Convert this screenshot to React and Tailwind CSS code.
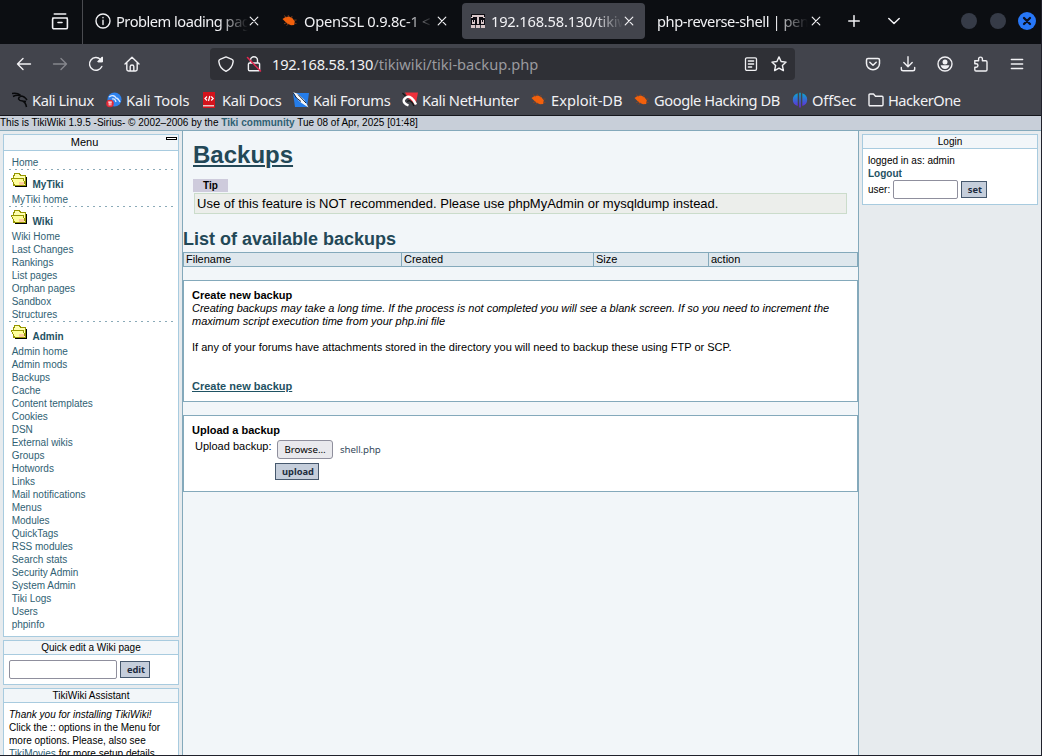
import React from "react";

const line = { fill: "none", stroke: "#f1f1f4", strokeWidth: 1.4, strokeLinecap: "round", strokeLinejoin: "round" };

function Icon({ children, className = "", size = 16, ...rest }) {
  return (
    <svg width={size} height={size} viewBox={`0 0 ${size} ${size}`} className={`block shrink-0 ${className}`} {...line} {...rest}>
      {children}
    </svg>
  );
}

function Bug({ className = "" }) {
  return (
    <svg width="15" height="14" viewBox="0 0 15 14" className={`block shrink-0 ${className}`}>
      <path d="M.5 5 L3.5 3 L7 2.6 L10.5 4.2 L12.8 7.5 L12.2 11 L9 11.2 L5 9.5 L2.5 7 Z" fill="#f2600c" />
      <path d="M2 1.5 L4.5 3.6 M6 1 L7 3 M10 2 L9.5 4.2 M12 6.2 L14.5 6 M12 9 L14.5 9.6 M4.5 8.7 L2 9.8 M6.5 10 L4.5 11.5" stroke="#8f4520" strokeWidth="0.8" fill="none" />
    </svg>
  );
}

function Close({ className = "" }) {
  return (
    <Icon size={10} className={className} strokeWidth="1.2">
      <path d="M1.2 1.2 L8.8 8.8 M8.8 1.2 L1.2 8.8" />
    </Icon>
  );
}

function TabBar() {
  const label = "overflow-hidden whitespace-nowrap text-[14.67px] leading-[20px] [mask-image:linear-gradient(to_right,black_78%,transparent)]";
  return (
    <div className="flex h-[44px] items-center bg-[#0c0e12] text-[#f1f1f4]">
      <div className="flex h-[44px] w-[83px] items-start border-r border-[#4a4b50] pl-[51px] pt-[13px]">
        <Icon size={18} strokeWidth="1.6">
          <path d="M3.3 1 H14.7 M1.8 5 H16.2 M3 5 h12 a1.4 1.4 0 0 1 1.4 1.4 v8 a1.4 1.4 0 0 1 -1.4 1.4 h-12 a1.4 1.4 0 0 1 -1.4 -1.4 v-8 a1.4 1.4 0 0 1 1.4 -1.4 M7 9.5 h4" />
        </Icon>
      </div>
      <div className="flex w-[177px] items-center pb-[2px] pl-[12px]">
        <Icon size={16}>
          <circle cx="8" cy="8" r="7" />
          <path d="M8 7.3 V11.5 M8 4.5 V4.8" />
        </Icon>
        <div className={`ml-[5px] w-[132px] tracking-[-0.5px] ${label}`}>Problem loading page</div>
        <Close className="ml-[1px]" />
      </div>
      <div className="flex w-[202px] items-center pb-[2px] pl-[22px]">
        <Bug />
        <div className={`ml-[7px] w-[130px] tracking-[-0.25px] ${label}`}>OpenSSL 0.9.8c-1 &lt; 0.9</div>
        <Close className="ml-[3px]" />
      </div>
      <div className="mb-[2px] flex h-[36px] w-[183px] items-center rounded-[4px] bg-[#42444c] pl-[9px]">
        <svg width="14" height="14" viewBox="0 0 14 14" className="block shrink-0" shapeRendering="crispEdges">
          <path fill="#0d0c12" d="M0 0h14v11H0z" />
          <path fill="#d8c6c8" d="M1 1h12v2H1z M6 3h2v7H6z M1 6h3v4H1z M10 6h3v4h-3z" />
          <path fill="#0d0c12" d="M2 6h1v2H2z M11 6h1v2h-1z" />
          <path fill="#d8c6c8" d="M0 11h4v3H0z M5 11h4v3H5z M10 11h4v3h-4z M0 3h2v1H0z M12 3h2v1h-2z" />
        </svg>
        <div className={`ml-[6px] w-[132px] tracking-[-0.2px] ${label}`}>192.168.58.130/tikiwiki</div>
        <Close className="ml-px" />
      </div>
      <div className="flex w-[190px] items-center pb-[2px] pl-[12px]">
        <div className={`w-[151px] tracking-[-0.42px] ${label}`}>php-reverse-shell | pente</div>
        <Close className="ml-[3px]" />
      </div>
      <div className="flex flex-1 items-center pb-[2px] pl-[13px]">
        <Icon size={12} strokeWidth="1.5"><path d="M6 .7 V11.3 M.7 6 H11.3" /></Icon>
        <Icon size={12} className="ml-[28px]" strokeWidth="1.5"><path d="M.8 3.5 L6 8.5 L11.2 3.5" /></Icon>
        <div className="ml-[61px] size-[16px] rounded-full bg-[#363b47]" />
        <div className="ml-[13px] size-[16px] rounded-full bg-[#363b47]" />
        <svg width="18" height="18" viewBox="0 0 18 18" className="ml-[12px] block">
          <circle cx="9" cy="9" r="9" fill="#2777f7" />
          <path d="M6 6 L12 12 M12 6 L6 12" stroke="#0b1020" strokeWidth="2.3" strokeLinecap="round" />
        </svg>
      </div>
    </div>
  );
}

function NavBar() {
  return (
    <div className="flex h-[40px] items-center pl-[16px] text-[14.67px] text-[#f1f1f4]">
      <Icon><path d="M14.5 8 H1.5 M7 2.5 L1.5 8 L7 13.5" /></Icon>
      <Icon className="ml-[20px]" stroke="#85868c"><path d="M1.5 8 H14.5 M9 2.5 L14.5 8 L9 13.5" /></Icon>
      <Icon className="ml-[20px]">
        <path d="M13.8 10.5 A6.4 6.4 0 1 1 12.5 3.4 L14 5 M14.2 1.5 V5.5 H10.2" />
        <path d="M14.2 1.5 V5.5 H10.2 Z" fill="#f1f1f4" />
      </Icon>
      <Icon className="ml-[20px]">
        <path d="M1 8 L8 1.2 L15 8 M2.8 6.5 V13.3 Q2.8 15 4.5 15 H11.5 Q13.2 15 13.2 13.3 V6.5 M6.2 15 V10.5 Q6.2 9 8 9 Q9.8 9 9.8 10.5 V15" />
      </Icon>
      <div className="ml-[70px] flex h-[32px] w-[585px] items-center rounded-[4px] bg-[#2f3036] pl-[8px]">
        <Icon>
          <path d="M8 .9 L14 3.3 Q15.4 3.8 15.1 5.8 Q14.3 12.3 8 15.3 Q1.7 12.3 .9 5.8 Q.6 3.8 2 3.3 Z" />
        </Icon>
        <Icon className="ml-[12px]">
          <path d="M4.5 7 V4.3 A3.5 3.5 0 0 1 11.5 4.3 V7 M3.6 7 h8.8 a1.2 1.2 0 0 1 1.2 1.2 v5.4 a1.2 1.2 0 0 1 -1.2 1.2 h-8.8 a1.2 1.2 0 0 1 -1.2 -1.2 v-5.4 a1.2 1.2 0 0 1 1.2 -1.2" />
          <path d="M1.5 1.5 L14.5 15" stroke="#e22850" strokeWidth="1.5" />
        </Icon>
        <div className="ml-[10px] w-[472px] whitespace-nowrap leading-[20px]">
          <span className="tracking-[-0.2px]">192.168.58.130</span><span className="text-[#9a9a9f]">/tikiwiki/tiki-backup.php</span>
        </div>
        <Icon size={14} strokeWidth="1.3">
          <rect x="1.5" y=".8" width="11" height="12.5" rx="1.3" />
          <path d="M4.3 4 H9.7 M4.3 7 H9.7 M4.3 10 H7.7" />
        </Icon>
        <Icon className="ml-[13px]">
          <path d="M8 .9 L10.1 5.5 L15.1 6.1 L11.4 9.5 L12.4 14.6 L8 12.1 L3.6 14.6 L4.6 9.5 L.9 6.1 L5.9 5.5 Z" />
        </Icon>
      </div>
      <Icon className="ml-[70px]" strokeWidth="1.5">
        <path d="M3 2.5 H13 Q14.5 2.5 14.5 4 V7.5 A6.5 6.2 0 0 1 1.5 7.5 V4 Q1.5 2.5 3 2.5 M4.8 6.3 L8 9.3 L11.2 6.3" />
      </Icon>
      <Icon className="ml-[19px]"><path d="M8 .8 V10.5 M3.8 6.5 L8 10.7 L12.2 6.5 M1.3 11.5 V13 Q1.3 14.8 3.1 14.8 H12.9 Q14.7 14.8 14.7 13 V11.5" /></Icon>
      <Icon className="ml-[21px]">
        <circle cx="8" cy="8" r="7" />
        <circle cx="8" cy="5.9" r="2.5" fill="#f1f1f4" stroke="none" />
        <path d="M3.6 9.2 H12.4 Q11.6 12.8 8 12.9 Q4.4 12.8 3.6 9.2 Z" fill="#f1f1f4" stroke="none" />
      </Icon>
      <Icon className="ml-[20px]">
        <path d="M2 4.8 H5.6 V3 A1.9 1.9 0 0 1 9.4 3 V4.8 H12.8 Q14 4.8 14 6 V13.8 Q14 15 12.8 15 H3 Q1.8 15 1.8 13.8 V11.3 H3.2 A1.7 1.7 0 0 0 3.2 7.8 H1.8 V4.8" />
      </Icon>
      <Icon className="ml-[20px]"><path d="M2.4 3.5 H13.6 M2.4 8 H13.6 M2.4 12.5 H13.6" strokeWidth="1.5" /></Icon>
    </div>
  );
}

const bookmarks = [
  { text: "Kali Linux", w: "w-[94px]", t: "tracking-[-0.42px]", icon: (
    <svg width="16" height="16" viewBox="0 0 16 16"><path d="M0 1.5 Q5 .5 8.5 3 M1 4.5 Q5 2.5 9 4 Q6.5 5 6.5 7 Q7.5 9 10.5 9 Q13.5 10 14.5 15 M8 4 Q12 3.5 15 8 M10 9 L14 9.5" fill="none" stroke="#08090b" strokeWidth="1.5" /></svg>) },
  { text: "Kali Tools", w: "w-[96px]", t: "tracking-[-0.1px]", icon: (
    <svg width="16" height="16" viewBox="0 0 16 16"><circle cx="8.5" cy="7.5" r="7" fill="#2f83ee" /><path d="M3 5 Q8 2 10 6 Q12 6 14 10 M6 7 Q9 6 10 10" fill="none" stroke="#dceaff" strokeWidth="1.3" /><circle cx="4" cy="11.5" r="3.8" fill="#e32937" /><path d="M2.2 10 H5.8 M3.2 10 V13.5 M4.9 10 V13.5" stroke="#fff" strokeWidth=".9" /></svg>) },
  { text: "Kali Docs", w: "w-[91px]", t: "tracking-[-0.33px]", icon: (
    <svg width="16" height="16" viewBox="0 0 16 16"><path d="M1 0 H13 V16 H1 Z" fill="#d4131c" /><path d="M1 13 H12 V14.5 H1 Z" fill="#e9c5c7" /><path d="M5 4.5 L3 6.5 L5 8.5 M9.2 4.5 L11.2 6.5 L9.2 8.5 M7.8 4 L6.5 9" fill="none" stroke="#fff" strokeWidth="1.2" /></svg>) },
  { text: "Kali Forums", w: "w-[109px]", t: "tracking-[-0.33px]", icon: (
    <svg width="16" height="16" viewBox="0 0 16 16"><path d="M0 1 H16 L14 15 H2 Z" fill="#257de9" /><path d="M0 0 L5 2 L11 7.5 L15.5 15.5 L8.5 11 L5 8 Z" fill="#f5f7fa" /><path d="M0 .5 L3.5 6 L8 9.5 M5 2.5 L13 11" fill="none" stroke="#17263c" strokeWidth="1" /></svg>) },
  { text: "Kali NetHunter", w: "w-[129px]", t: "tracking-[-0.36px]", icon: (
    <svg width="16" height="16" viewBox="0 0 16 16"><path d="M3 .5 H16 L13.5 13 L6 6 Z" fill="#ee303b" /><path d="M6.5 13.5 Q.5 11 2 7.5 Q5 3 9.5 6 Q12 8 14 12.5" fill="none" stroke="#fff" strokeWidth="2.4" /><path d="M5.5 10 Q6.5 7 10 10.5 L12 14 M.5 1 L3.5 4" fill="none" stroke="#171717" strokeWidth="1.3" /></svg>) },
  { text: "Exploit-DB", w: "w-[103px]", t: "", icon: <Bug /> },
  { text: "Google Hacking DB", w: "w-[158px]", t: "tracking-[-0.42px]", icon: <Bug /> },
  { text: "OffSec", w: "w-[76px]", t: "tracking-[-0.1px]", icon: (
    <svg width="16" height="16" viewBox="0 0 16 16"><defs><linearGradient id="os" x1="0" y1="0" x2="0" y2="1"><stop offset="0" stopColor="#08a9cf" /><stop offset="1" stopColor="#6a24d8" /></linearGradient></defs><path d="M5.7 1.2 V14 Q.8 12.5 .8 7.5 Q.8 3 5.7 1.2 M7.2 .8 H8.8 V15.5 H7.2 Z M10.3 1.2 V14 Q15.2 12.5 15.2 7.5 Q15.2 3 10.3 1.2" fill="url(#os)" /></svg>) },
  { text: "HackerOne", w: "w-[110px]", t: "tracking-[-0.5px]", icon: (
    <Icon><path d="M1 12.5 V3 Q1 2 2 2 H5.5 L7.5 4.2 H14 Q15 4.2 15 5.2 V12.7 Q15 13.8 14 13.8 H2 Q1 13.8 1 12.5 Z" /></Icon>) },
];

function Bookmarks() {
  return (
    <div className="flex h-[31px] items-center pl-[12px] text-[14.67px] text-[#f1f1f4]">
      {bookmarks.map((b) => (
        <div key={b.text} className={`flex shrink-0 items-center ${b.w}`}>
          <div className="flex w-[16px] shrink-0">{b.icon}</div>
          <span className={`ml-[4px] whitespace-nowrap leading-[20px] ${b.t}`}>{b.text}</span>
        </div>
      ))}
    </div>
  );
}

function Folder() {
  return (
    <svg width="17" height="14" viewBox="0 0 17 14" className="block shrink-0" shapeRendering="crispEdges">
      <path d="M4 13h12v1H4z M15 4h1v10h-1z" fill="#000" />
      <path d="M2.5 3.5 L4 .5 H8 L10 2.5 H14.5 V12.5 H3 Z" fill="#ffffb0" stroke="#969600" />
      <path d="M.5 5.5 H12 L14.5 12.5 H3.5 Z" fill="#ffff9c" stroke="#969600" />
      <path d="M8 9h5v3H8z" fill="#ffce9c" />
    </svg>
  );
}

function MenuSection({ title, items }) {
  return (
    <div className="pt-px">
      <div className="flex h-[23px] pl-[2px]">
        <div className="pt-[3px]"><Folder /></div>
        <span className="ml-[4.5px] pt-[8px] text-[10px] font-bold leading-[13px] text-[#1f5263]">{title}</span>
      </div>
      {items.map((i) => <div key={i} className="h-[13px] pl-[2.7px] leading-[13px]">{i}</div>)}
    </div>
  );
}

function Dashes() {
  return <div className="-mb-px h-px bg-[repeating-linear-gradient(to_right,#8aaab8_0_2px,transparent_2px_6px)]" />;
}

function Panel({ title, children, className = "", titleClass = "" }) {
  return (
    <div className={`border border-[#a8cbdf] bg-white ${className}`}>
      <div className={`border-b border-[#a8cbdf] bg-[#f2f6f9] text-center ${titleClass}`}>{title}</div>
      {children}
    </div>
  );
}

const button = "border border-[#46586d] bg-[#c5cedb] text-center font-['Noto_Sans',sans-serif] text-[9.3px] font-bold text-[#1e2c40]";
const field = "rounded-[2px] border border-[#8f8f9d] bg-white";
const admin = ["Admin home", "Admin mods", "Backups", "Cache", "Content templates", "Cookies", "DSN", "External wikis", "Groups", "Hotwords", "Links", "Mail notifications", "Menus", "Modules", "QuickTags", "RSS modules", "Search stats", "Security Admin", "System Admin", "Tiki Logs", "Users", "phpinfo"];

function LeftColumn() {
  return (
    <div className="flex w-[183px] shrink-0 flex-col gap-[3px] border-r border-[#84a9bb] bg-[#e7ebee] pl-[3px] pr-[3px] pt-[3px]">
      <Panel className="relative h-[503px] shrink-0" title="Menu" titleClass="h-[16px] pr-[13px] text-[11px] leading-[15px]">
        <div className="absolute right-[1px] top-[2px] h-[3px] w-[11px] border border-black bg-white" />
        <div className="px-[5px] pt-[5px] text-[#2f6173]">
          <div className="h-[13px] pl-[2.7px] leading-[13px]">Home</div>
          <Dashes />
          <MenuSection title="MyTiki" items={["MyTiki home"]} />
          <Dashes />
          <MenuSection title="Wiki" items={["Wiki Home", "Last Changes", "Rankings", "List pages", "Orphan pages", "Sandbox", "Structures"]} />
          <Dashes />
          <MenuSection title="Admin" items={admin} />
        </div>
      </Panel>
      <Panel className="h-[45px] shrink-0" title="Quick edit a Wiki page" titleClass="h-[14px] leading-[13px]">
        <div className="flex items-center pl-[5px] pt-[5px]">
          <div className={`h-[19px] w-[108px] ${field}`} />
          <div className={`ml-[3px] h-[17px] w-[30px] pl-[2px] leading-[15px] ${button}`}>edit</div>
        </div>
      </Panel>
      <Panel className="h-[90px] shrink-0" title="TikiWiki Assistant" titleClass="h-[14px] leading-[13px]">
        <div className="whitespace-nowrap pl-[5px] pt-[5px] leading-[13px]">
          <div className="italic">Thank you for installing TikiWiki!</div>
          <div>Click the :: options in the Menu for</div>
          <div>more options. Please, also see</div>
          <div><span className="text-[#2f6173]">TikiMovies</span> for more setup details.</div>
        </div>
      </Panel>
    </div>
  );
}

function Center() {
  return (
    <div className="flex w-[675px] shrink-0 flex-col text-[11px] leading-[13px]">
      <h1 className="ml-[10px] mt-[10px] h-[28px] text-[24px] font-bold leading-[28px] text-[#234857] underline decoration-2 underline-offset-2">Backups</h1>
      <div className="ml-[10px] mt-[10px] h-[13px] w-[35px] bg-[#cecbdc] text-center text-[10px] font-bold leading-[13px]">Tip</div>
      <div className="ml-[11px] mt-px h-[21px] w-[653px] border border-[#cbdccb] bg-[#eceeeb] pl-[2px] text-[13px] leading-[19px]">
        Use of this feature is NOT recommended. Please use phpMyAdmin or mysqldump instead.
      </div>
      <h2 className="mt-[15px] h-[23px] text-[18px] font-bold leading-[21px] text-[#234857]">List of available backups</h2>
      <div className="grid h-[15px] grid-cols-[218px_192px_115px_1fr] border border-[#84a9bb] bg-[#dee7ed]">
        <div className="border-r border-[#84a9bb] pl-[2px]">Filename</div>
        <div className="border-r border-[#84a9bb] pl-[2px]">Created</div>
        <div className="border-r border-[#84a9bb] pl-[2px]">Size</div>
        <div className="pl-[2px]">action</div>
      </div>
      <div className="mt-[13px] h-[122px] border border-[#84a9bb] bg-white pl-[8px] pt-[8px]">
        <div className="font-bold">Create new backup</div>
        <div className="whitespace-nowrap italic">Creating backups may take a long time. If the process is not completed you will see a blank screen. If so you need to increment the</div>
        <div className="italic">maximum script execution time from your php.ini file</div>
        <div className="mt-[13px]">If any of your forums have attachments stored in the directory you will need to backup these using FTP or SCP.</div>
        <div className="mt-[26px] font-bold text-[#1f5263] underline">Create new backup</div>
      </div>
      <div className="mt-[13px] h-[77px] border border-[#84a9bb] bg-white pl-[8px] pt-[8px]">
        <div className="font-bold">Upload a backup</div>
        <div className="flex pl-[3px]">
          <div className="w-[80px] pt-[3px]">Upload backup:</div>
          <div className="flex h-[26px] items-start pl-[2px] pt-[3px] font-['Noto_Sans',sans-serif] text-[9.7px] leading-[17px]">
            <div className="h-[19px] w-[56px] rounded-[3px] border border-[#8f8f9d] bg-[#e9e9ed] text-center">Browse…</div>
            <div className="ml-[7px] pt-px tracking-[-0.1px] text-[#35495c]">shell.php</div>
          </div>
        </div>
        <div className={`ml-[83px] h-[17px] w-[44px] pl-[2px] leading-[15px] ${button}`}>upload</div>
      </div>
    </div>
  );
}

function RightColumn() {
  return (
    <div className="flex-1 border-l border-[#84a9bb] bg-[#e7ebee] pl-[3px] pt-[3px]">
      <Panel className="h-[71px] w-[176px]" title="Login" titleClass="h-[14px] leading-[13px]">
        <div className="pl-[5px] pt-[5px] leading-[13px]">
          <div>logged in as: admin</div>
          <div className="font-bold text-[#1f5263]">Logout</div>
          <div className="flex h-[19px] items-center">
            <span className="w-[25px]">user:</span>
            <div className={`h-[19px] w-[65px] ${field}`} />
            <div className={`ml-[3px] h-[17px] w-[26px] pl-[2px] leading-[15px] ${button}`}>set</div>
          </div>
        </div>
      </Panel>
    </div>
  );
}

export default function App() {
  return (
    <div className="flex h-[756px] w-[1042px] flex-col overflow-hidden border-b border-r border-[#20212b] bg-[#f2f6f9] font-['Liberation_Sans',Arial,sans-serif] text-[10px] text-black">
      <div className="shrink-0 border-b border-[#15161c] bg-[#42444c] font-['Noto_Sans',sans-serif]">
        <TabBar />
        <NavBar />
        <Bookmarks />
      </div>
      <div className="h-[15px] shrink-0 whitespace-nowrap border-b border-[#84a9bb] bg-[#c8cfd9] leading-[13px] tracking-[0.01px]">
        This is TikiWiki 1.9.5 -Sirius- © 2002–2006 by the <span className="font-bold text-[#2f6173]">Tiki community</span> Tue 08 of Apr, 2025 [01:48]
      </div>
      <div className="flex min-h-0 flex-1 overflow-hidden">
        <LeftColumn />
        <Center />
        <RightColumn />
      </div>
    </div>
  );
}
